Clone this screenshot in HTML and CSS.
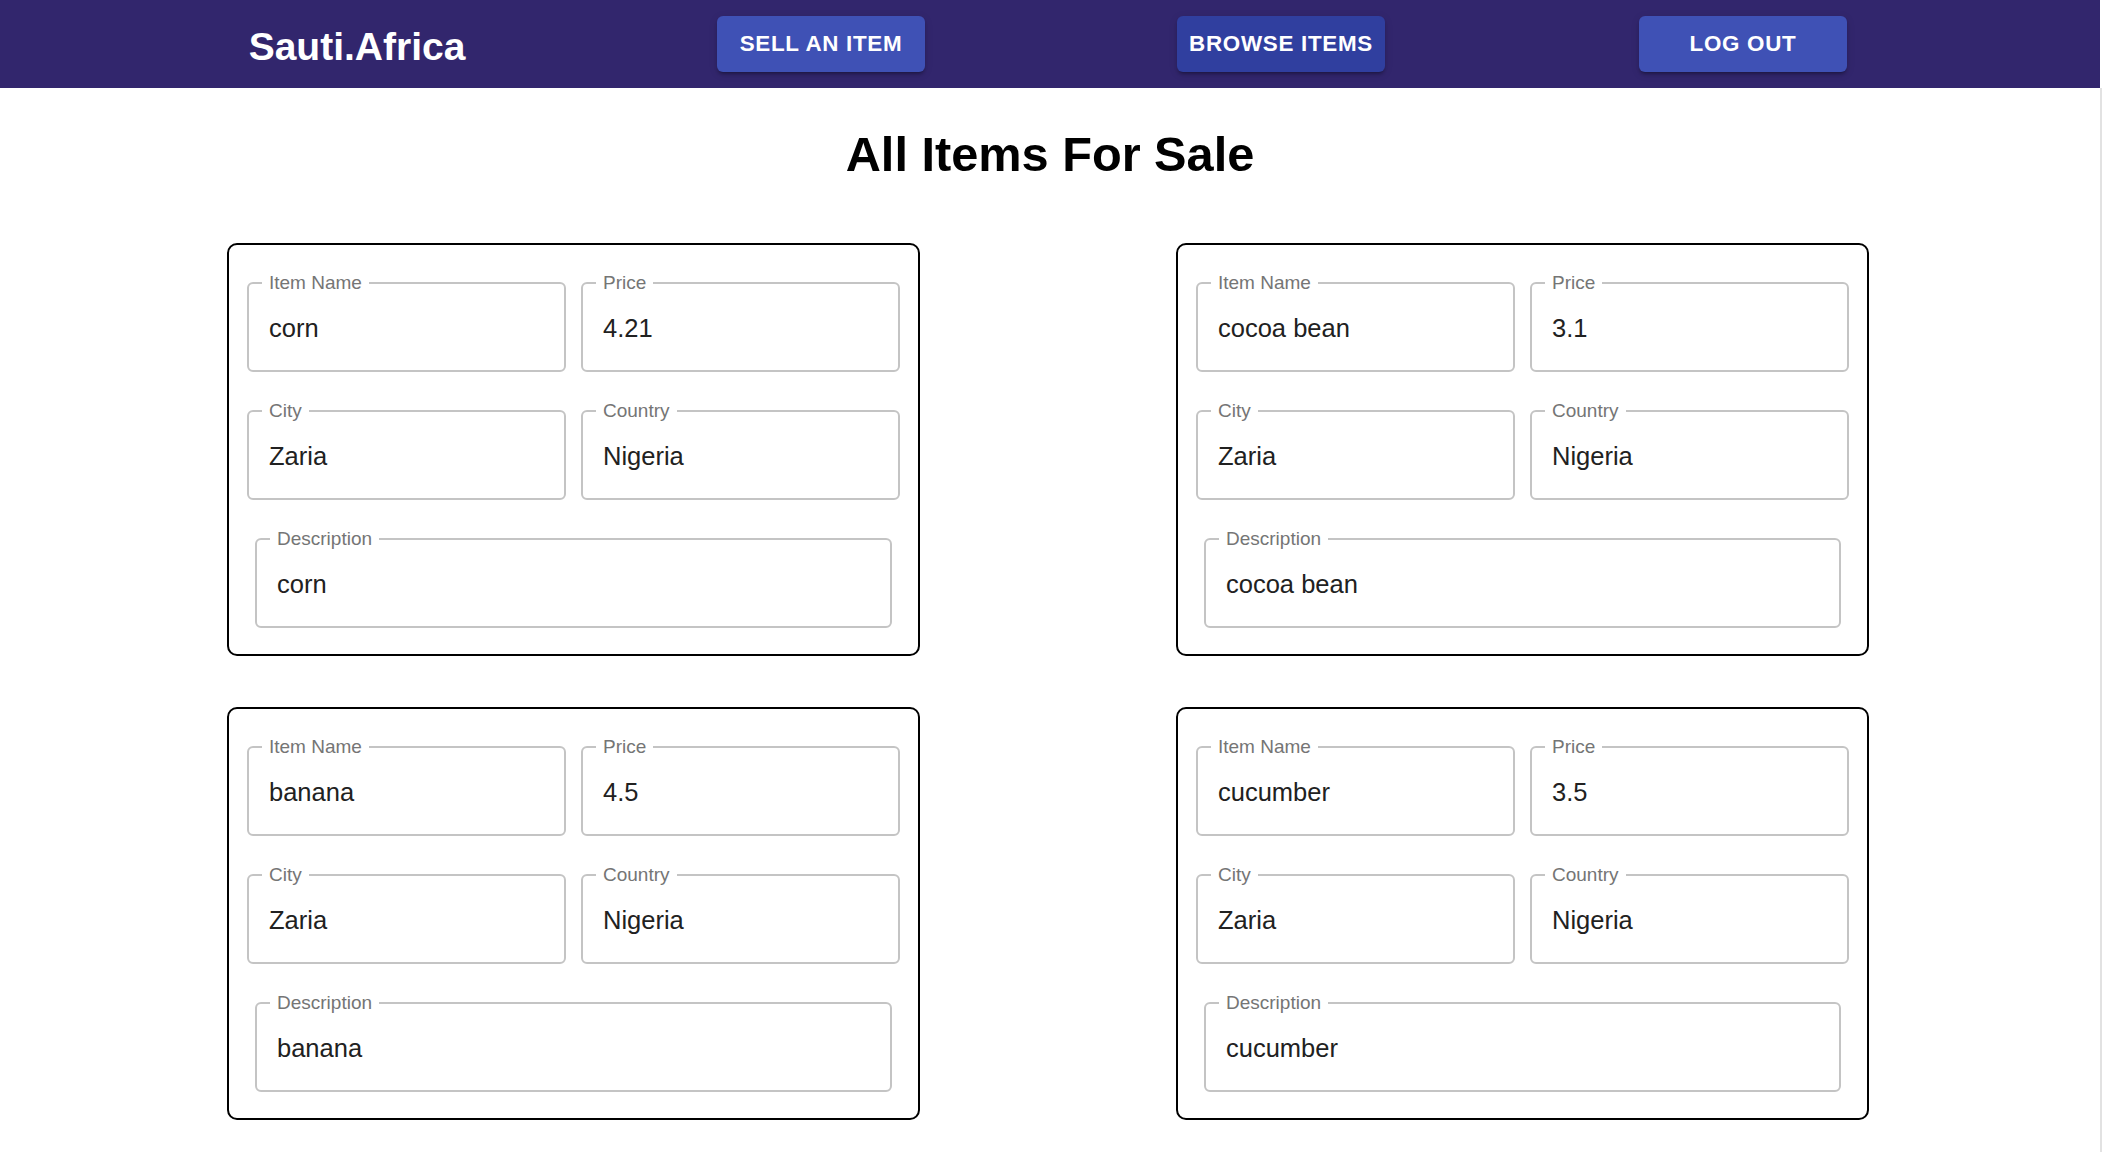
FILE: index.html
```html
<!DOCTYPE html>
<html lang="en">
<head>
<meta charset="utf-8">
<title>Sauti.Africa – All Items For Sale</title>
<link rel="stylesheet" href="styles.css">
</head>
<body>
<div class="app">
  <header class="topbar">
    <div class="nav-cell"><span class="logo">Sauti.Africa</span></div>
    <div class="nav-cell"><button class="nav-btn nav-btn-first">Sell an item</button></div>
    <div class="nav-cell"><button class="nav-btn nav-btn-active">Browse items</button></div>
    <div class="nav-cell"><button class="nav-btn">Log out</button></div>
  </header>
  <main class="content">
    <h1 class="page-title">All Items For Sale</h1>
    <div class="grid">
      <section class="card">
        <fieldset class="field"><legend>Item Name</legend><div class="value">corn</div></fieldset>
        <fieldset class="field"><legend>Price</legend><div class="value">4.21</div></fieldset>
        <fieldset class="field"><legend>City</legend><div class="value">Zaria</div></fieldset>
        <fieldset class="field"><legend>Country</legend><div class="value">Nigeria</div></fieldset>
        <fieldset class="field field-wide"><legend>Description</legend><div class="value">corn</div></fieldset>
      </section>
      <section class="card">
        <fieldset class="field"><legend>Item Name</legend><div class="value">cocoa bean</div></fieldset>
        <fieldset class="field"><legend>Price</legend><div class="value">3.1</div></fieldset>
        <fieldset class="field"><legend>City</legend><div class="value">Zaria</div></fieldset>
        <fieldset class="field"><legend>Country</legend><div class="value">Nigeria</div></fieldset>
        <fieldset class="field field-wide"><legend>Description</legend><div class="value">cocoa bean</div></fieldset>
      </section>
      <section class="card">
        <fieldset class="field"><legend>Item Name</legend><div class="value">banana</div></fieldset>
        <fieldset class="field"><legend>Price</legend><div class="value">4.5</div></fieldset>
        <fieldset class="field"><legend>City</legend><div class="value">Zaria</div></fieldset>
        <fieldset class="field"><legend>Country</legend><div class="value">Nigeria</div></fieldset>
        <fieldset class="field field-wide"><legend>Description</legend><div class="value">banana</div></fieldset>
      </section>
      <section class="card">
        <fieldset class="field"><legend>Item Name</legend><div class="value">cucumber</div></fieldset>
        <fieldset class="field"><legend>Price</legend><div class="value">3.5</div></fieldset>
        <fieldset class="field"><legend>City</legend><div class="value">Zaria</div></fieldset>
        <fieldset class="field"><legend>Country</legend><div class="value">Nigeria</div></fieldset>
        <fieldset class="field field-wide"><legend>Description</legend><div class="value">cucumber</div></fieldset>
      </section>
    </div>
  </main>
</div>
<div class="edge"></div>
</body>
</html>
```
FILE: styles.css
```css
html, body {
  margin: 0;
  padding: 0;
  height: 100%;
  overflow: hidden;
}
body {
  display: flex;
  background: #ffffff;
  font-family: "Liberation Sans", Arial, Helvetica, sans-serif;
  color: #000;
}
.app {
  flex: 1;
  min-width: 0;
}
.edge {
  width: 2px;
  flex: none;
  background: linear-gradient(#ffffff 0, #ffffff 88px, #e2e2e2 88px, #e2e2e2 100%);
}
.topbar {
  height: 88px;
  background: #32266d;
  display: flex;
  align-items: center;
  padding: 0 126px;
  box-sizing: border-box;
}
.nav-cell {
  flex: 1;
  display: flex;
  justify-content: center;
  align-items: center;
}
.logo {
  color: #ffffff;
  font-size: 39px;
  font-weight: 700;
  line-height: 44px;
  margin-top: 6px;
}
.nav-btn {
  width: 208px;
  height: 56px;
  border: none;
  border-radius: 6px;
  background: #3f51b5;
  color: #ffffff;
  font-family: "Liberation Sans", Arial, Helvetica, sans-serif;
  font-size: 22.4px;
  font-weight: 700;
  letter-spacing: 0.7px;
  text-transform: uppercase;
  padding: 0;
  box-shadow: 0 4px 2px -3px rgba(0,0,0,0.2), 0 3px 3px 0 rgba(0,0,0,0.14), 0 2px 8px 0 rgba(0,0,0,0.12);
  cursor: pointer;
}
.nav-btn-first {
  margin-left: 4px;
}
.nav-btn-active {
  background: #303f9f;
}
.page-title {
  margin: 38px 0 0;
  font-size: 48.7px;
  line-height: 56px;
  font-weight: 700;
  text-align: center;
}
.grid {
  display: grid;
  grid-template-columns: 693px 693px;
  column-gap: 256px;
  row-gap: 51px;
  padding-left: 227px;
  margin-top: 61px;
}
.card {
  border: 2px solid #000;
  border-radius: 10px;
  padding: 28px 18px 26px;
  display: grid;
  grid-template-columns: 1fr 1fr;
  column-gap: 15px;
  row-gap: 29px;
}
.field {
  margin: 0;
  min-width: 0;
  border: 2px solid #c4c4c4;
  border-radius: 6px;
  padding: 2px 0 8px 13px;
}
.field legend {
  padding: 0 7px;
  font-size: 19px;
  line-height: 20px;
  color: #757575;
}
.field-wide {
  grid-column: 1 / -1;
  margin: 0 8px;
}
.value {
  padding-left: 7px;
  font-size: 25.5px;
  line-height: 67px;
  color: #212121;
}
```
